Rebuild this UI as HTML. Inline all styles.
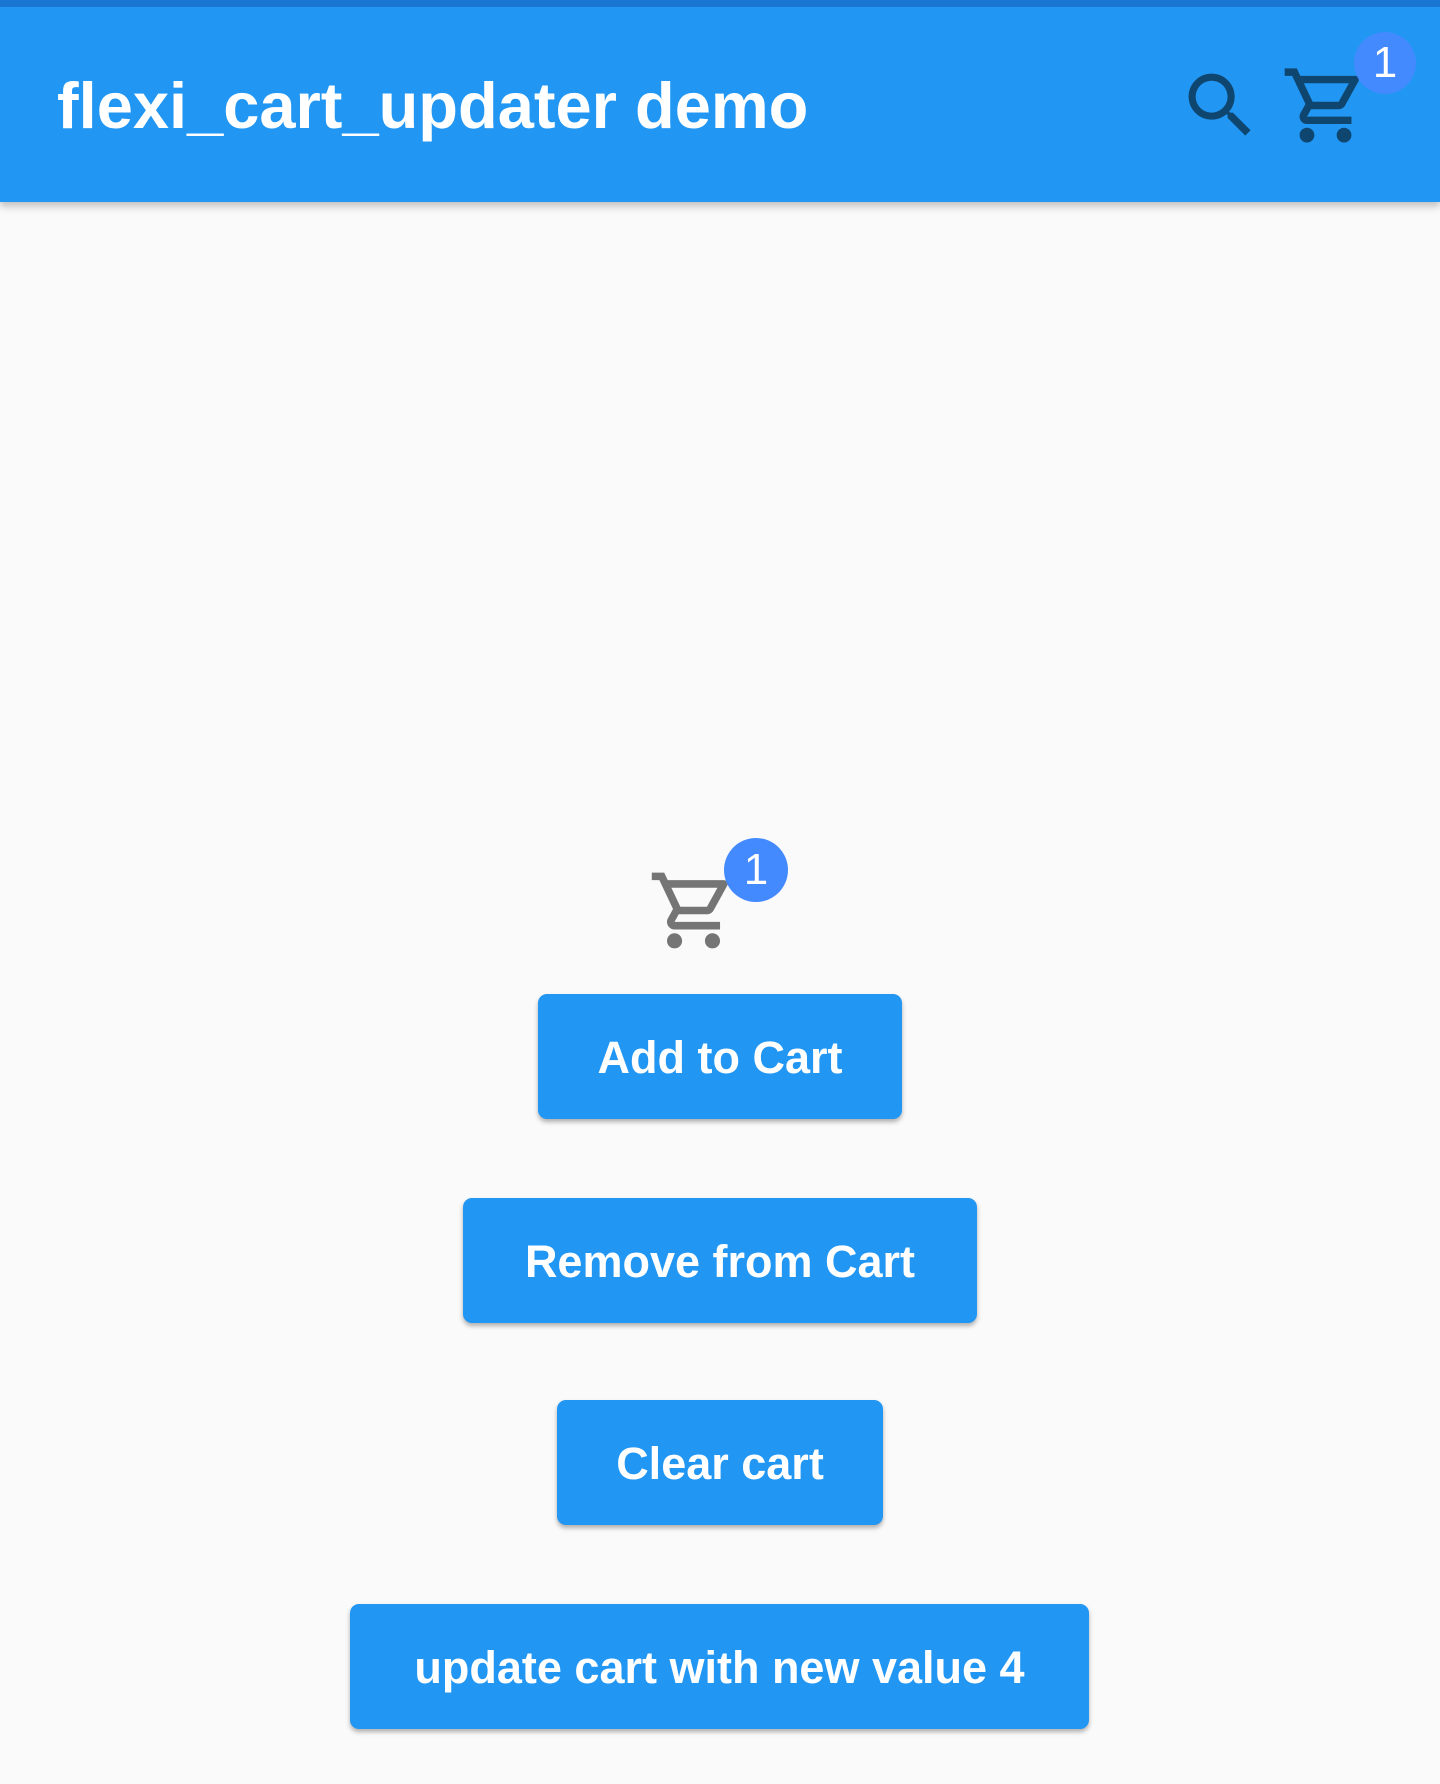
<!DOCTYPE html>
<html><head><meta charset="utf-8"><style>
body{margin:0;width:1440px;height:1784px;background:#fafafa;font-family:"Liberation Sans",sans-serif;position:relative;overflow:hidden}
.bar{position:absolute;left:0;top:0;width:1440px;height:202px;background:#2196f3;box-shadow:0 4px 8px rgba(0,0,0,.25)}
.stripe{position:absolute;left:0;top:0;width:1440px;height:7px;background:#1976d2}
.title{position:absolute;left:57px;top:68px;font-size:65px;font-weight:bold;color:#fff;letter-spacing:0px;white-space:nowrap}
svg{position:absolute}
.badge{position:absolute;border-radius:50%;background:#448aff;color:#fff;text-align:center}
.btn{position:absolute;background:#2196f3;color:#fff;border-radius:9px;font-size:45px;font-weight:bold;text-align:center;line-height:127px;height:125px;box-shadow:0 3px 5px rgba(0,0,0,.3)}
</style></head><body>
<div class="bar"><div class="stripe"></div>
<div class="title">flexi_cart_updater demo</div>
<svg style="left:1178px;top:63px" width="85" height="85" viewBox="0 0 24 24"><path fill="#0f4670" d="M15.5 14h-.79l-.28-.27C15.41 12.59 16 11.11 16 9.5 16 5.91 13.090 3 9.5 3S3 5.91 3 9.5 5.91 16 9.5 16c1.61 0 3.090-.59 4.23-1.57l.27.28v.79l5 4.99L20.49 19l-4.99-5zm-6 0C7.01 14 5 11.99 5 9.5S7.01 5 9.5 5 14 7.01 14 9.5 11.990 14 9.5 14z"/></svg>
<svg style="left:1281px;top:61px" width="89" height="89" viewBox="0 0 24 24"><path fill="#0f4670" d="M15.55 13c.75 0 1.41-.41 1.75-1.03l3.58-6.49c.37-.66-.11-1.48-.87-1.48H5.21l-.94-2H1v2h2l3.6 7.590-1.35 2.44C4.52 15.37 5.48 17 7 17h12v-2H7l1.1-2h7.450zM6.16 6h12.15l-2.76 5H8.53L6.16 6zM7 18c-1.1 0-1.99.9-1.99 2S5.9 22 7 22s2-.9 2-2-.9-2-2-2zm10 0c-1.1 0-1.99.9-1.99 2s.89 2 1.99 2 2-.9 2-2-.9-2-2-2z"/></svg>
<div class="badge" style="left:1354px;top:32px;width:62px;height:62px;font-size:44px;line-height:62px">1</div>
</div>
<svg style="left:648px;top:865px" width="91" height="91" viewBox="0 0 24 24"><path fill="#757575" d="M15.55 13c.75 0 1.41-.41 1.75-1.03l3.58-6.490c.37-.66-.11-1.48-.87-1.48H5.21l-.94-2H1v2h2l3.6 7.590-1.35 2.44C4.52 15.37 5.48 17 7 17h12v-2H7l1.1-2h7.450zM6.16 6h12.15l-2.76 5H8.53L6.16 6zM7 18c-1.1 0-1.99.9-1.99 2S5.9 22 7 22s2-.9 2-2-.9-2-2-2zm10 0c-1.1 0-1.99.9-1.99 2s.89 2 1.99 2 2-.9 2-2-.9-2-2-2z"/></svg>
<div class="badge" style="left:724px;top:838px;width:64px;height:64px;font-size:44px;line-height:64px">1</div>
<div class="btn" style="left:538px;top:994px;width:364px">Add to Cart</div>
<div class="btn" style="left:463px;top:1198px;width:514px">Remove from Cart</div>
<div class="btn" style="left:557px;top:1400px;width:326px">Clear cart</div>
<div class="btn" style="left:350px;top:1604px;width:739px">update cart with new value 4</div>
</body></html>
